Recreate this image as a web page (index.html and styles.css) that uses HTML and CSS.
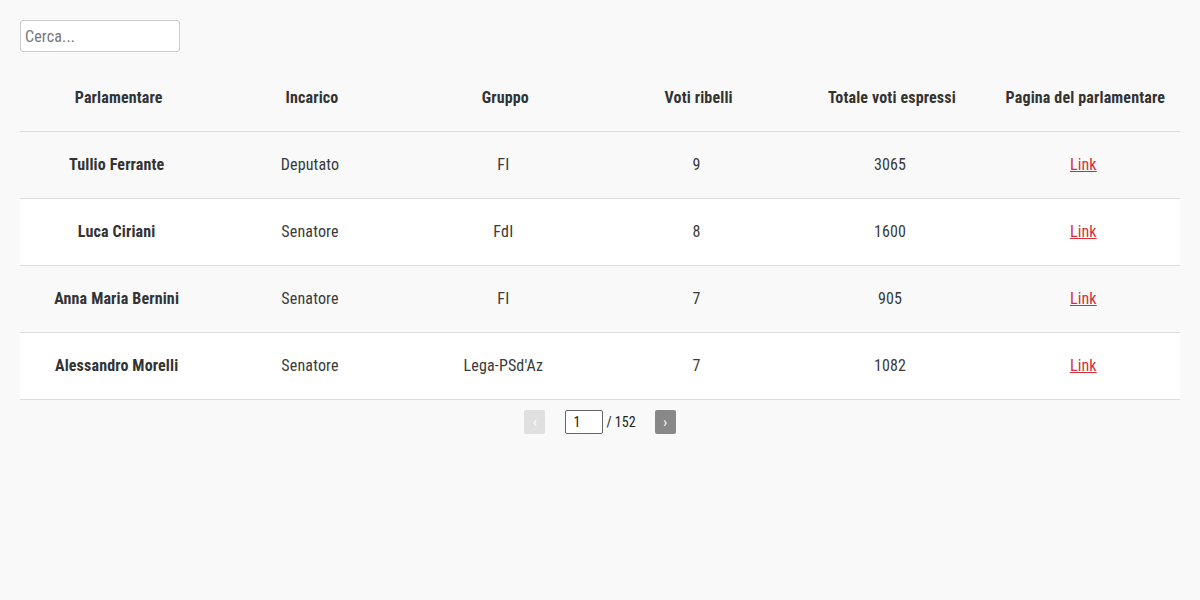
FILE: index.html
```html
<!DOCTYPE html>
<html lang="it">
<head>
<meta charset="utf-8">
<title>Voti ribelli</title>
<link rel="stylesheet" href="styles.css">
</head>
<body>
<div class="page">
  <input class="search" type="text" placeholder="Cerca...">
  <table class="table">
    <thead>
      <tr>
        <th>Parlamentare</th>
        <th>Incarico</th>
        <th>Gruppo</th>
        <th>Voti ribelli</th>
        <th>Totale voti espressi</th>
        <th>Pagina del parlamentare</th>
      </tr>
    </thead>
    <tbody>
      <tr class="odd">
        <td class="name">Tullio Ferrante</td>
        <td>Deputato</td>
        <td>FI</td>
        <td>9</td>
        <td>3065</td>
        <td><a href="#">Link</a></td>
      </tr>
      <tr class="even">
        <td class="name">Luca Ciriani</td>
        <td>Senatore</td>
        <td>FdI</td>
        <td>8</td>
        <td>1600</td>
        <td><a href="#">Link</a></td>
      </tr>
      <tr class="odd">
        <td class="name">Anna Maria Bernini</td>
        <td>Senatore</td>
        <td>FI</td>
        <td>7</td>
        <td>905</td>
        <td><a href="#">Link</a></td>
      </tr>
      <tr class="even">
        <td class="name">Alessandro Morelli</td>
        <td>Senatore</td>
        <td>Lega-PSd'Az</td>
        <td>7</td>
        <td>1082</td>
        <td><a href="#">Link</a></td>
      </tr>
    </tbody>
  </table>
  <div class="pager">
    <button class="pbtn prev" type="button">‹</button>
    <input class="pinput" type="text" value="1">
    <span class="ptotal">/ 152</span>
    <button class="pbtn next" type="button">›</button>
  </div>
</div>
</body>
</html>
```
FILE: styles.css
```css
html, body {
  margin: 0;
  padding: 0;
  background: #f9f9f9;
}
body {
  font-family: "Roboto Condensed", Roboto, "Liberation Sans", sans-serif;
  color: #333;
  letter-spacing: 0.15px;
}
.page {
  padding: 20px;
}
.search {
  display: block;
  box-sizing: border-box;
  width: 160px;
  height: 32px;
  padding: 0 4px;
  border: 1px solid #ccc;
  border-radius: 3px;
  background: #fff;
  font-family: inherit;
  font-size: 16px;
  letter-spacing: 0.15px;
  color: #333;
  outline: none;
}
.search::placeholder {
  color: #777;
}
.table {
  width: 100%;
  margin-top: 12px;
  border-collapse: collapse;
  table-layout: fixed;
}
.table th {
  height: 67px;
  padding: 0 0 0 4px;
  font-size: 16px;
  font-weight: 700;
  color: #333;
  text-align: center;
  border-bottom: 1px solid #ddd;
}
.table td {
  height: 64px;
  padding: 0 0 2px;
  font-size: 16px;
  font-weight: 400;
  color: #3a3a3a;
  text-align: center;
  border-bottom: 1px solid #ddd;
}
.table td.name {
  font-weight: 700;
  color: #333;
}
.table tr.odd td {
  background: #f9f9f9;
}
.table tr.even td {
  background: #fff;
}
.table a {
  color: #d32f3a;
  text-decoration: underline;
}
.pager {
  display: flex;
  justify-content: center;
  align-items: center;
  margin-top: 10px;
  font-size: 14px;
  color: #222;
  letter-spacing: 0;
}
.pbtn {
  box-sizing: border-box;
  width: 21px;
  height: 24px;
  padding: 0;
  border: none;
  border-radius: 2px;
  color: #fff;
  font-family: inherit;
  font-size: 14px;
  line-height: 24px;
}
.prev {
  background: #e0e0e0;
  margin-right: 20px;
}
.next {
  background: #888;
  margin-left: 19px;
}
.pinput {
  box-sizing: border-box;
  width: 38px;
  height: 24px;
  padding: 0 7px;
  border: 1px solid #666;
  border-radius: 2px;
  background: #fff;
  font-family: inherit;
  font-size: 14px;
  color: #222;
  outline: none;
}
.ptotal {
  margin-left: 3px;
}
```
